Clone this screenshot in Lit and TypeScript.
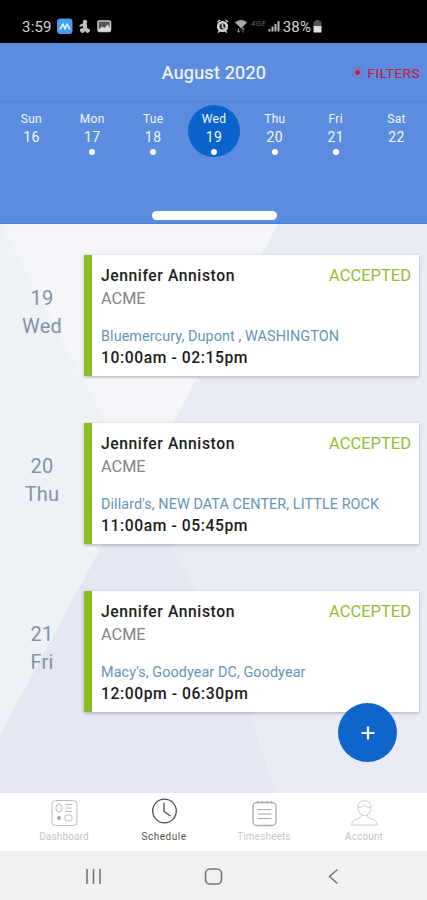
import { LitElement, html, css, svg } from "lit";
import { customElement } from "lit/decorators.js";
import { classMap } from "lit/directives/class-map.js";

const week = [
  { name: "Sun", date: 16, dot: false },
  { name: "Mon", date: 17, dot: true },
  { name: "Tue", date: 18, dot: true },
  { name: "Wed", date: 19, dot: true, selected: true },
  { name: "Thu", date: 20, dot: true },
  { name: "Fri", date: 21, dot: true },
  { name: "Sat", date: 22, dot: false },
];

const shifts = [
  { date: 19, day: "Wed", place: "Bluemercury, Dupont , WASHINGTON", time: "10:00am - 02:15pm" },
  { date: 20, day: "Thu", place: "Dillard's, NEW DATA CENTER, LITTLE ROCK", time: "11:00am - 05:45pm" },
  { date: 21, day: "Fri", place: "Macy's, Goodyear DC, Goodyear", time: "12:00pm - 06:30pm" },
];

const tabs = [
  {
    label: "Dashboard",
    icon: svg`<g stroke="#bcbcbc"><rect x="3" y="2.500" width="25" height="25" rx="3.500"/><ellipse cx="10" cy="10" rx="3.200" ry="4"/><path d="M16.500 6.500H23M16.500 10H23M16.500 13.500H23"/><circle cx="10" cy="20" r="1.800" fill="#a5a5a5"/><rect x="15.800" y="16.800" width="7.400" height="6.200" rx="2.800"/></g>`,
  },
  {
    label: "Schedule",
    active: true,
    icon: svg`<g stroke="#4c4c4c" stroke-width="1.300"><circle cx="15.500" cy="13" r="11.800"/><path d="M15 4.800V13.500L21.500 18"/></g>`,
  },
  {
    label: "Timesheets",
    icon: svg`<g stroke="#aaa"><rect x="4" y="4.500" width="23" height="23" rx="4" stroke-width="1.300"/><path d="M9 2.800V5.500M13.500 2.800V5.500M18 2.800V5.500M22.500 2.800V5.500M8.500 11.500H22.500M8.500 16H22.500M8.500 20.500H22.500"/></g>`,
  },
  {
    label: "Account",
    icon: svg`<g stroke="#cbcbcb"><path d="M9 9C9 5 11.500 2.800 15.500 2.800S22 5 22 9C22 13.500 19.500 17.500 15.500 17.500S9 13.500 9 9ZM9.300 9.500C12 9.500 14 8 15 6.500C17 9 19 9.500 21.700 9.500M12.500 16.500V19C10 21 3.500 20.500 2.500 27H28.500C27.500 20.500 21 21 18.500 19V16.500"/></g>`,
  },
];

@customElement("status-bar")
class StatusBar extends LitElement {
  static styles = css`
    :host { display: flex; height: 43px; background: #000; color: #d4d4d4; box-sizing: border-box; padding: 11px 103px 0 22px; font-size: 15px; line-height: 32px; justify-content: space-between; align-items: flex-start; }
    .group { display: flex; height: 32px; align-items: center; }
    .time { width: 34px; letter-spacing: 0.2px; }
    .pct { letter-spacing: 0.1px; margin-right: 1px; }
    svg { display: block; }
  `;
  render() {
    return html`
      <div class="group">
        <span class="time">3:59</span>
        <svg width="58" height="20" viewBox="0 0 58 20">
          <rect x="1" y="1.500" width="15.500" height="15.500" rx="3.500" fill="#4a9bee" />
          <path d="M4 12.500L7 7L9 12L11 7L14 12.500" fill="none" stroke="#d9efff" stroke-width="1.600" stroke-linejoin="round" />
          <g fill="#bdbdbd"><circle cx="29" cy="5" r="2.200" /><path d="M27.500 6L31 7V11L34 12.500V14.500H24V12L27 11V9L23.500 10V8Z" /><circle cx="26.500" cy="14" r="1.900" /><circle cx="31.500" cy="14" r="1.900" /></g>
          <rect x="42" y="4" width="12.500" height="10.500" rx="1.500" fill="#555" stroke="#c8c8c8" stroke-width="1.600" />
          <path d="M43 12.500L46 9.500L48.500 11L52 7.500L54 11.500V14H43Z" fill="#ddd" />
        </svg>
      </div>
      <div class="group">
        <svg width="66" height="20" viewBox="0 0 66 20">
          <circle cx="5.500" cy="9.500" r="4.300" fill="#222" stroke="#d5d5d5" stroke-width="2.600" />
          <path d="M0.500 5L3 3M11 5L8.500 3M1 15.500L3 13.500M10 15.500L8 13.500M5.500 7V10L7.500 11.500" stroke="#d5d5d5" stroke-width="1.500" />
          <path d="M18 5.500C21 2 27 2 30 5.500L24 11.500Z" fill="#a8a8a8" />
          <path d="M21.500 11V15M20 13.500L21.500 15.500L23 13.500M26 15.500V11M24.500 12.500L26 10.500L27.500 12.500" fill="none" stroke="#8a8a8a" />
          <path d="M51.500 14.500V12H53.500V14.500ZM54.500 14.500V9.500H56.500V14.500ZM57.500 14.500V7H59.500V14.500ZM60.500 14.500V4H62.500V14.500Z" fill="#b8b8b8" />
          <text x="34" y="8.500" font-size="8" font-style="italic" fill="#6a6a6a" textLength="15">4GE</text>
        </svg>
        <span class="pct">38%</span>
        <svg width="12" height="20" viewBox="0 0 12 20"><path d="M3.500 3H7.500V4.500H9.500V10H1.500V4.500H3.500Z" fill="#555" /><rect x="1.500" y="9" width="8" height="6.500" rx="0.500" fill="#ddd" /></svg>
      </div>
    `;
  }
}

@customElement("week-header")
class WeekHeader extends LitElement {
  static styles = css`
    :host { display: flex; flex-direction: column; height: 181px; box-sizing: border-box; background: #5b8cdf; color: #f4f8ff; border-bottom: 1px solid #4783d8; }
    .top { display: grid; grid-template-columns: 1fr auto 1fr; align-items: center; height: 58px; border-bottom: 1px solid #5383d2; }
    .title { grid-column: 2; font-size: 18px; -webkit-text-stroke: 0.2px #f4f8ff; letter-spacing: 0.25px; padding: 1px 0 0 1px; }
    .filters { display: flex; align-items: center; justify-self: end; gap: 4px; padding: 1px 7px 0 0; font-size: 13.700px; color: #c71a3c; -webkit-text-stroke: 0.2px #c71a3c; letter-spacing: 0.450px; }
    .days { display: flex; height: 52px; padding: 3px 0 0 1px; }
    .day { flex: 1; display: flex; justify-content: center; }
    .disc { width: 52px; height: 52px; border-radius: 50%; display: flex; flex-direction: column; align-items: center; }
    .selected .disc { background: #0b64cd; }
    .name { font-size: 12px; line-height: 14px; margin-top: 7px; letter-spacing: 0.3px; }
    .date { font-size: 14px; line-height: 17px; margin-top: 3px; letter-spacing: 0.4px; }
    .dot { width: 6px; height: 6px; border-radius: 50%; background: #fff; margin-top: 3px; }
    .space { flex: 1; }
    .handle { width: 125px; height: 9px; border-radius: 5px; background: #fff; align-self: center; margin: 0 0 3px 1px; }
  `;
  render() {
    return html`
      <div class="top">
        <span class="title">August 2020</span>
        <span class="filters">
          <svg width="13" height="13" viewBox="0 0 13 13"><circle cx="6.500" cy="6.500" r="5.400" fill="none" stroke="#9b60aa" /><circle cx="6.500" cy="6.500" r="2.400" fill="#d80f28" /></svg>
          <span>FILTERS</span>
        </span>
      </div>
      <div class="days">
        ${week.map((d) => html`
          <div class=${classMap({ day: true, selected: !!d.selected })}>
            <div class="disc">
              <span class="name">${d.name}</span>
              <span class="date">${d.date}</span>
              ${d.dot ? html`<span class="dot"></span>` : ""}
            </div>
          </div>`)}
      </div>
      <div class="space"></div>
      <div class="handle"></div>
    `;
  }
}

@customElement("shift-list")
class ShiftList extends LitElement {
  static styles = css`
    :host { display: block; position: relative; height: 569px; background: #e8ebf4; overflow: hidden; }
    .backdrop { position: absolute; inset: 0; }
    .list { position: relative; display: flex; flex-direction: column; gap: 46px; padding: 31px 8px 0 0; }
    .row { display: flex; height: 122px; }
    .when { width: 84px; display: flex; flex-direction: column; align-items: center; padding-top: 29px; box-sizing: border-box; font-size: 20px; line-height: 28px; color: #8591a6; letter-spacing: 0.2px; }
    .card { flex: 1; display: flex; flex-direction: column; box-sizing: border-box; height: 121px; background: #fff; border-left: 8px solid #87bf24; padding: 9px 8px 0 9px; box-shadow: 0 1px 3px rgba(70, 75, 95, 0.4); white-space: nowrap; }
    .head { display: flex; justify-content: space-between; line-height: 23px; }
    .name { font-size: 15.700px; font-weight: 500; color: #202020; letter-spacing: 0.570px; }
    .status { font-size: 16.500px; color: #92bd35; }
    .client { font-size: 16.300px; line-height: 22px; color: #838383; margin-top: 1px; }
    .place { font-size: 14.400px; line-height: 20px; color: #6595b5; margin-top: 17px; letter-spacing: 0.080px; }
    .time { font-size: 15.700px; font-weight: 500; line-height: 20px; color: #1c1c1c; margin-top: 1px; letter-spacing: 0.570px; }
    .add { position: absolute; left: 338px; top: 479px; width: 59px; height: 59px; border: 0; padding: 0; border-radius: 50%; background: #0f65cb; display: grid; place-items: center; }
  `;
  render() {
    return html`
      <svg class="backdrop" width="427" height="569" viewBox="0 0 427 569">
        <path d="M0 0H150L136 270L0 511Z" fill="#eef1f5" />
        <path d="M3 5L5 0H278L136 270L122 230L75 140Z" fill="#f3f5f9" />
        <path d="M134 262L0 511V569H275L235 441L175 329Z" fill="#e4e6f2" />
      </svg>
      <div class="list">
        ${shifts.map((s) => html`
          <div class="row">
            <div class="when"><span>${s.date}</span><span>${s.day}</span></div>
            <div class="card">
              <div class="head"><span class="name">Jennifer Anniston</span><span class="status">ACCEPTED</span></div>
              <span class="client">ACME</span>
              <span class="place">${s.place}</span>
              <span class="time">${s.time}</span>
            </div>
          </div>`)}
      </div>
      <button class="add"><svg width="14" height="14" viewBox="0 0 14 14"><path d="M7 0.500V13.500M0.500 7H13.500" stroke="#fff" stroke-width="2.200" /></svg></button>
    `;
  }
}

@customElement("tab-bar")
class TabBar extends LitElement {
  static styles = css`
    :host { display: flex; height: 58px; background: #fff; padding: 0 13px 0 14px; box-sizing: border-box; }
    .tab { flex: 1; display: flex; flex-direction: column; align-items: center; padding-top: 5px; font-size: 10px; line-height: 12px; letter-spacing: 0.15px; color: #c6c6c6; }
    .active { color: #555; letter-spacing: 0.5px; }
    svg { display: block; margin-bottom: 2px; }
  `;
  render() {
    return tabs.map((t) => html`
      <div class=${classMap({ tab: true, active: !!t.active })}>
        <svg width="31" height="31" viewBox="0 0 31 31" fill="none">${t.icon}</svg>
        <span>${t.label}</span>
      </div>`);
  }
}

@customElement("system-nav")
class SystemNav extends LitElement {
  static styles = css`
    :host { display: flex; height: 49px; padding: 0 34px 0 33px; background: #f1f1f1; box-sizing: border-box; }
    .key { flex: 1; display: flex; justify-content: center; padding-top: 15px; }
  `;
  render() {
    const icons = [
      svg`<path d="M4 3V18M10.500 3V18M17 3V18"/>`,
      svg`<rect x="2.500" y="3" width="16" height="15" rx="4.500"/>`,
      svg`<path d="M14.500 3.500L6.500 10.500L14.500 17.500"/>`,
    ];
    return icons.map((i) => html`<div class="key"><svg width="21" height="21" viewBox="0 0 21 21" fill="none" stroke="#777" stroke-width="1.600">${i}</svg></div>`);
  }
}

@customElement("app-root")
class AppRoot extends LitElement {
  static styles = css`
    :host { display: flex; flex-direction: column; width: 427px; height: 900px; overflow: hidden; font-family: Roboto, "Liberation Sans", sans-serif; }
  `;
  render() {
    return html`
      <status-bar></status-bar>
      <week-header></week-header>
      <shift-list></shift-list>
      <tab-bar></tab-bar>
      <system-nav></system-nav>
    `;
  }
}
